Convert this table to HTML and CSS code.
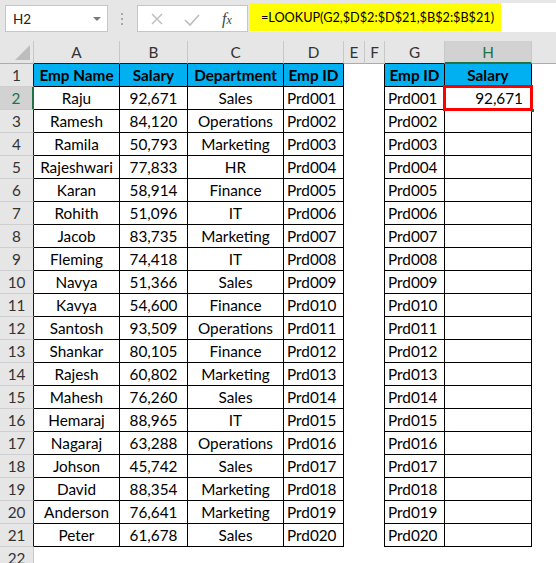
FILE: index.html
```html
<!DOCTYPE html>
<html>
<head>
<meta charset="utf-8">
<link rel="stylesheet" href="styles.css">
</head>
<body>
<div class="topbar">
  <div class="namebox"><span class="ref">H2</span><span class="caret"></span></div>
  <div class="dots"><i></i><i></i><i></i></div>
  <div class="fxbox">
    <svg class="ico-x" width="12" height="12" viewBox="0 0 12 12"><path d="M1 1 L11 11 M11 1 L1 11" stroke="#bcbcbc" stroke-width="1.4" fill="none"/></svg>
    <svg class="ico-ok" width="16" height="12" viewBox="0 0 16 12"><path d="M1 6 L6 11 L15 1" stroke="#bcbcbc" stroke-width="1.6" fill="none"/></svg>
    <span class="fx">f<small>x</small></span>
  </div>
  <div class="input"><span class="formula">=LOOKUP(G2,$D$2:$D$21,$B$2:$B$21)</span></div>
</div>

<div class="sheet">
  <div class="corner"><svg width="33" height="22" viewBox="0 0 33 22"><polygon points="30,4 30,19 15,19" fill="#bdbdbd"/></svg></div>
  <div class="ch tb">A</div><div class="ch tb">B</div><div class="ch tb">C</div><div class="ch tb">D</div><div class="ch">E</div><div class="ch">F</div><div class="ch tb">G</div><div class="ch tb sel">H</div><div class="ch last"></div>

  <div class="rh tbl">1</div><div class="t hd">Emp Name</div><div class="t hd">Salary</div><div class="t hd">Department</div><div class="t hd">Emp ID</div><div class="blank"></div><div class="blank edge"></div><div class="t hd">Emp ID</div><div class="t hd">Salary</div><div class="blank"></div>

  <div class="rh tbl rsel">2</div><div class="t">Raju</div><div class="t">92,671</div><div class="t">Sales</div><div class="t tl">Prd001</div><div class="blank"></div><div class="blank edge"></div><div class="t tl">Prd001</div><div class="t tr active">92,671<span class="selbox"></span><span class="handle"></span></div><div class="blank"></div>

  <div class="rh tbl">3</div><div class="t">Ramesh</div><div class="t">84,120</div><div class="t">Operations</div><div class="t tl">Prd002</div><div class="blank"></div><div class="blank edge"></div><div class="t tl">Prd002</div><div class="t tr"></div><div class="blank"></div>

  <div class="rh tbl">4</div><div class="t">Ramila</div><div class="t">50,793</div><div class="t">Marketing</div><div class="t tl">Prd003</div><div class="blank"></div><div class="blank edge"></div><div class="t tl">Prd003</div><div class="t tr"></div><div class="blank"></div>

  <div class="rh tbl">5</div><div class="t">Rajeshwari</div><div class="t">77,833</div><div class="t">HR</div><div class="t tl">Prd004</div><div class="blank"></div><div class="blank edge"></div><div class="t tl">Prd004</div><div class="t tr"></div><div class="blank"></div>

  <div class="rh tbl">6</div><div class="t">Karan</div><div class="t">58,914</div><div class="t">Finance</div><div class="t tl">Prd005</div><div class="blank"></div><div class="blank edge"></div><div class="t tl">Prd005</div><div class="t tr"></div><div class="blank"></div>

  <div class="rh tbl">7</div><div class="t">Rohith</div><div class="t">51,096</div><div class="t">IT</div><div class="t tl">Prd006</div><div class="blank"></div><div class="blank edge"></div><div class="t tl">Prd006</div><div class="t tr"></div><div class="blank"></div>

  <div class="rh tbl">8</div><div class="t">Jacob</div><div class="t">83,735</div><div class="t">Marketing</div><div class="t tl">Prd007</div><div class="blank"></div><div class="blank edge"></div><div class="t tl">Prd007</div><div class="t tr"></div><div class="blank"></div>

  <div class="rh tbl">9</div><div class="t">Fleming</div><div class="t">74,418</div><div class="t">IT</div><div class="t tl">Prd008</div><div class="blank"></div><div class="blank edge"></div><div class="t tl">Prd008</div><div class="t tr"></div><div class="blank"></div>

  <div class="rh tbl">10</div><div class="t">Navya</div><div class="t">51,366</div><div class="t">Sales</div><div class="t tl">Prd009</div><div class="blank"></div><div class="blank edge"></div><div class="t tl">Prd009</div><div class="t tr"></div><div class="blank"></div>

  <div class="rh tbl">11</div><div class="t">Kavya</div><div class="t">54,600</div><div class="t">Finance</div><div class="t tl">Prd010</div><div class="blank"></div><div class="blank edge"></div><div class="t tl">Prd010</div><div class="t tr"></div><div class="blank"></div>

  <div class="rh tbl">12</div><div class="t">Santosh</div><div class="t">93,509</div><div class="t">Operations</div><div class="t tl">Prd011</div><div class="blank"></div><div class="blank edge"></div><div class="t tl">Prd011</div><div class="t tr"></div><div class="blank"></div>

  <div class="rh tbl">13</div><div class="t">Shankar</div><div class="t">80,105</div><div class="t">Finance</div><div class="t tl">Prd012</div><div class="blank"></div><div class="blank edge"></div><div class="t tl">Prd012</div><div class="t tr"></div><div class="blank"></div>

  <div class="rh tbl">14</div><div class="t">Rajesh</div><div class="t">60,802</div><div class="t">Marketing</div><div class="t tl">Prd013</div><div class="blank"></div><div class="blank edge"></div><div class="t tl">Prd013</div><div class="t tr"></div><div class="blank"></div>

  <div class="rh tbl">15</div><div class="t">Mahesh</div><div class="t">76,260</div><div class="t">Sales</div><div class="t tl">Prd014</div><div class="blank"></div><div class="blank edge"></div><div class="t tl">Prd014</div><div class="t tr"></div><div class="blank"></div>

  <div class="rh tbl">16</div><div class="t">Hemaraj</div><div class="t">88,965</div><div class="t">IT</div><div class="t tl">Prd015</div><div class="blank"></div><div class="blank edge"></div><div class="t tl">Prd015</div><div class="t tr"></div><div class="blank"></div>

  <div class="rh tbl">17</div><div class="t">Nagaraj</div><div class="t">63,288</div><div class="t">Operations</div><div class="t tl">Prd016</div><div class="blank"></div><div class="blank edge"></div><div class="t tl">Prd016</div><div class="t tr"></div><div class="blank"></div>

  <div class="rh tbl">18</div><div class="t">Johson</div><div class="t">45,742</div><div class="t">Sales</div><div class="t tl">Prd017</div><div class="blank"></div><div class="blank edge"></div><div class="t tl">Prd017</div><div class="t tr"></div><div class="blank"></div>

  <div class="rh tbl">19</div><div class="t">David</div><div class="t">88,354</div><div class="t">Marketing</div><div class="t tl">Prd018</div><div class="blank"></div><div class="blank edge"></div><div class="t tl">Prd018</div><div class="t tr"></div><div class="blank"></div>

  <div class="rh tbl">20</div><div class="t">Anderson</div><div class="t">76,641</div><div class="t">Marketing</div><div class="t tl">Prd019</div><div class="blank"></div><div class="blank edge"></div><div class="t tl">Prd019</div><div class="t tr"></div><div class="blank"></div>

  <div class="rh tbl">21</div><div class="t">Peter</div><div class="t">61,678</div><div class="t">Sales</div><div class="t tl">Prd020</div><div class="blank"></div><div class="blank edge"></div><div class="t tl">Prd020</div><div class="t tr"></div><div class="blank"></div>

  <div class="rh">22</div><div class="blank"></div><div class="blank"></div><div class="blank"></div><div class="blank"></div><div class="blank"></div><div class="blank"></div><div class="blank"></div><div class="blank"></div><div class="blank"></div>
</div>
</body>
</html>
```

FILE: styles.css
```css
html, body {
  margin: 0;
  padding: 0;
  background: #ffffff;
  overflow: hidden;
}
body {
  width: 556px;
  height: 563px;
  font-family: Lato, "Liberation Sans", sans-serif;
  color: #000;
}

/* ---------- formula bar ---------- */
.topbar {
  height: 41px;
  box-sizing: border-box;
  background: #e6e6e6;
  display: flex;
  align-items: flex-start;
  padding-top: 5px;
}
.namebox {
  margin-left: 5px;
  width: 103px;
  height: 27px;
  box-sizing: border-box;
  background: #fff;
  border: 1px solid #c6c6c6;
  display: flex;
  align-items: center;
  justify-content: space-between;
  padding: 0 6px 0 7px;
}
.ref {
  font-size: 13.5px;
  color: #222;
}
.caret {
  width: 0;
  height: 0;
  border-left: 4px solid transparent;
  border-right: 4px solid transparent;
  border-top: 4px solid #7a7a7a;
  margin-top: 1px;
}
.dots {
  margin-left: 13px;
  margin-top: 8px;
  display: flex;
  flex-direction: column;
  gap: 3px;
}
.dots i {
  display: block;
  width: 2px;
  height: 2px;
  background: #a8a8a8;
}
.fxbox {
  margin-left: 14px;
  width: 111px;
  height: 27px;
  box-sizing: border-box;
  background: #fff;
  border: 1px solid #c6c6c6;
  display: flex;
  align-items: center;
  padding-left: 13px;
}
.ico-ok {
  margin-left: 21px;
  margin-top: 2px;
}
.fx {
  margin-left: 22px;
  font-family: "Liberation Serif", serif;
  font-style: italic;
  font-size: 16px;
  color: #444;
}
.fx small {
  font-size: 12px;
}
.input {
  margin-left: 2px;
  margin-top: -2px;
  flex: 1;
  height: 29px;
  background: #fff;
  display: flex;
  align-items: flex-start;
}
.formula {
  background: #ffff00;
  height: 28px;
  display: flex;
  align-items: center;
  padding: 0 8px 0 11px;
  width: 251px;
  box-sizing: border-box;
  font-size: 12.7px;
  color: #000;
  white-space: nowrap;
}

/* ---------- sheet grid ---------- */
.sheet {
  display: grid;
  grid-template-columns: 34px 86px 68px 96px 60px 21px 20px 60px 87px 1fr;
  grid-auto-rows: 23px;
  font-size: 15.3px;
}
.sheet > div {
  box-sizing: border-box;
  line-height: 22px;
  white-space: nowrap;
  overflow: visible;
}
.corner {
  background: #e6e6e6;
  border-right: 1px solid #c8c8c8;
  border-bottom: 1px solid #ababab;
}
.corner svg {
  display: block;
}
.ch {
  background: #e6e6e6;
  border-right: 1px solid #c8c8c8;
  border-bottom: 1px solid #ababab;
  text-align: center;
  color: #333;
}
.ch.tb {
  border-bottom-color: #1a1a1a;
}
.ch.sel {
  background: #d2d2d2;
  color: #217346;
  border-bottom: 2px solid #217346;
}
.ch.last {
  border-right: none;
}
.rh {
  background: #e6e6e6;
  border-right: 1px solid #c8c8c8;
  border-bottom: 1px solid #cfcfcf;
  text-align: center;
  color: #333;
}
.rh.tbl {
  border-right-color: #1a1a1a;
}
.rh.rsel {
  background: #d2d2d2;
  color: #217346;
  border-right: 2px solid #217346;
}
.blank {
  background: #fff;
}
.blank.edge {
  border-right: 1px solid #000;
}
.t {
  background: #fff;
  border-right: 1px solid #000;
  border-bottom: 1px solid #000;
  text-align: center;
}
.t.hd {
  background: #00b0f0;
  font-weight: 700;
}
.t.tl {
  text-align: left;
  padding-left: 3px;
}
.t.tr {
  text-align: right;
  padding-right: 8px;
}
.active {
  position: relative;
}
.selbox {
  position: absolute;
  left: -2px;
  top: -2px;
  right: -2px;
  bottom: -2px;
  border: 3px solid #ff0000;
  pointer-events: none;
}
.handle {
  position: absolute;
  right: -3px;
  bottom: -3px;
  width: 3px;
  height: 3px;
  background: #1e6b40;
}
```
